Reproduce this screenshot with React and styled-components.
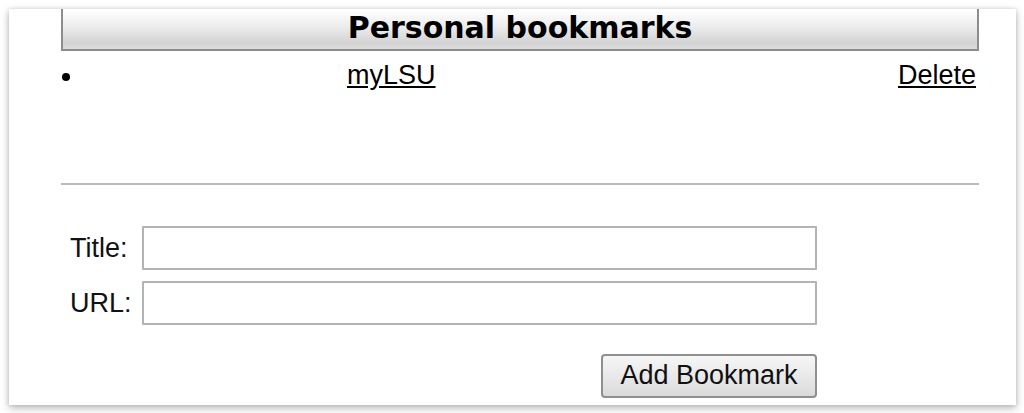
import React from "react";
import styled, { createGlobalStyle } from "styled-components";

const Global = createGlobalStyle`
  html, body { margin: 0; padding: 0; background: #ffffff; }
  body { font-family: "Liberation Sans", Arial, sans-serif; }
  * { box-sizing: border-box; }
`;

const Page = styled.div`
  width: 1024px;
  height: 413px;
  padding: 9px 8px 8px 9px;
  background: #ffffff;
  overflow: hidden;
`;

const Card = styled.div`
  width: 1007px;
  height: 396px;
  background: #ffffff;
  box-shadow: 0 3px 8px rgba(0, 0, 0, 0.28), 0 0 4px rgba(0, 0, 0, 0.12);
  padding: 0 37px 0 52px;
  display: flex;
  flex-direction: column;
`;

const Header = styled.div`
  height: 42px;
  border: 2px solid #8d8d8d;
  border-top: none;
  background: linear-gradient(#ffffff 0%, #ececec 45%, #d3d3d3 85%, #dcdcdc 100%);
  display: flex;
  align-items: center;
  justify-content: center;
  font-family: "DejaVu Sans", Verdana, sans-serif;
  font-weight: bold;
  font-size: 30px;
  color: #000;
  padding-bottom: 3px;
`;

const ListArea = styled.ul`
  list-style: none;
  margin: 0;
  padding: 9px 0 0 0;
  height: 134px;
  border-bottom: 2px solid #bcbcbc;
`;

const Item = styled.li`
  display: flex;
  align-items: center;
  height: 31px;
  font-size: 27px;
  line-height: 31px;
`;

const Bullet = styled.span`
  width: 8px;
  height: 8px;
  border-radius: 50%;
  background: #000;
  margin-left: 1px;
  margin-top: 3px;
`;

const NameLink = styled.a`
  color: #000;
  text-decoration: underline;
  margin-left: 277px;
  cursor: pointer;
`;

const DeleteLink = styled.a`
  color: #000;
  text-decoration: underline;
  margin-left: auto;
  margin-right: 3px;
  cursor: pointer;
`;

const Form = styled.form`
  display: grid;
  grid-template-columns: 72px 675px;
  grid-auto-rows: auto;
  row-gap: 11px;
  align-items: center;
  margin: 41px 0 0 9px;
`;

const Label = styled.label`
  font-size: 27px;
  color: #111;
`;

const Input = styled.input`
  height: 44px;
  width: 675px;
  border: 2px solid #b3b3b3;
  border-radius: 1px;
  background: #fff;
  font-size: 24px;
  font-family: "Liberation Sans", Arial, sans-serif;
  padding: 0 6px;
  outline: none;
`;

const ButtonCell = styled.div`
  grid-column: 2;
  display: flex;
  justify-content: flex-end;
  margin-top: 18px;
`;

const Button = styled.button`
  width: 216px;
  height: 44px;
  border: 2px solid #8f8f8f;
  border-radius: 4px;
  background: linear-gradient(#f6f6f6, #e6e6e6 60%, #dadada);
  font-family: "Liberation Sans", Arial, sans-serif;
  font-size: 27px;
  color: #111;
  padding: 0 0 2px 0;
  cursor: pointer;
`;

export default function App() {
  return (
    <>
      <Global />
      <Page>
        <Card>
          <Header>Personal bookmarks</Header>
          <ListArea>
            <Item>
              <Bullet />
              <NameLink>myLSU</NameLink>
              <DeleteLink>Delete</DeleteLink>
            </Item>
          </ListArea>
          <Form onSubmit={(e) => e.preventDefault()}>
            <Label htmlFor="bm-title">Title:</Label>
            <Input id="bm-title" type="text" />
            <Label htmlFor="bm-url">URL:</Label>
            <Input id="bm-url" type="text" />
            <ButtonCell>
              <Button type="submit">Add Bookmark</Button>
            </ButtonCell>
          </Form>
        </Card>
      </Page>
    </>
  );
}
